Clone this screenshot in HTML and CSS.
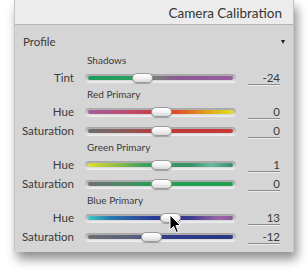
FILE: index.html
```html
<!DOCTYPE html>
<html>
<head>
<meta charset="utf-8">
<link rel="stylesheet" href="styles.css">
</head>
<body>
<div class="panel">
  <div class="header">Camera Calibration</div>
  <div class="profile"><span>Profile</span><span class="tri"></span></div>
  <div class="section">Shadows</div>
  <div class="row">
    <div class="label">Tint</div>
    <div class="track"><div class="bar g-tint"></div><div class="thumb" style="left:38%"></div></div>
    <div class="value">-24</div>
  </div>
  <div class="section">Red Primary</div>
  <div class="row">
    <div class="label">Hue</div>
    <div class="track"><div class="bar g-rhue"></div><div class="thumb" style="left:50%"></div></div>
    <div class="value">0</div>
  </div>
  <div class="row second">
    <div class="label">Saturation</div>
    <div class="track"><div class="bar g-rsat"></div><div class="thumb" style="left:50%"></div></div>
    <div class="value">0</div>
  </div>
  <div class="section">Green Primary</div>
  <div class="row">
    <div class="label">Hue</div>
    <div class="track"><div class="bar g-ghue"></div><div class="thumb" style="left:50.5%"></div></div>
    <div class="value">1</div>
  </div>
  <div class="row second">
    <div class="label">Saturation</div>
    <div class="track"><div class="bar g-gsat"></div><div class="thumb" style="left:50%"></div></div>
    <div class="value">0</div>
  </div>
  <div class="section">Blue Primary</div>
  <div class="row">
    <div class="label">Hue</div>
    <div class="track"><div class="bar g-bhue"></div><div class="thumb" style="left:56.5%"></div>
      <svg class="cursor" width="13" height="20" viewBox="0 0 13 20"><path d="M1 1 L1 16 L4.6 12.4 L7.2 18.5 L9.4 17.5 L6.9 11.6 L11.6 11.6 Z" fill="#000" stroke="#fff" stroke-width="1" stroke-linejoin="round"/></svg>
    </div>
    <div class="value">13</div>
  </div>
  <div class="row second">
    <div class="label">Saturation</div>
    <div class="track"><div class="bar g-bsat"></div><div class="thumb" style="left:44%"></div></div>
    <div class="value">-12</div>
  </div>
</div>
</body>
</html>
```
FILE: styles.css
```css
html, body {
  margin: 0;
  padding: 0;
  background: #ffffff;
}
body {
  width: 308px;
  height: 274px;
  overflow: hidden;
  font-family: "Lato", "Open Sans", sans-serif;
  color: #3a3a3a;
}
.panel {
  margin-left: 14px;
  width: 280px;
  height: 252px;
  background: #d5d5d5;
  box-shadow: 3px 7px 10px rgba(0, 0, 0, 0.45);
  box-sizing: border-box;
  border-left: 1px solid #c4c4c4;
  border-right: 1px solid #c4c4c4;
}
.header {
  height: 25px;
  box-sizing: border-box;
  background: #ececec;
  border-bottom: 1px solid #b4b4b4;
  text-align: right;
  padding-right: 11px;
  font-size: 13.5px;
  line-height: 27px;
  color: #363636;
}
.profile {
  height: 27px;
  box-sizing: border-box;
  padding: 6px 8px 0 8px;
  display: flex;
  align-items: center;
  justify-content: space-between;
  font-size: 11.5px;
}
.tri {
  width: 0;
  height: 0;
  border-left: 2.5px solid transparent;
  border-right: 2.5px solid transparent;
  border-top: 4px solid #222;
}
.section {
  height: 17px;
  line-height: 17px;
  padding-left: 72px;
  font-size: 10px;
  color: #3a3a3a;
}
.row {
  height: 17px;
  display: flex;
  align-items: center;
}
.row.second {
  margin-top: 2px;
}
.label {
  width: 59px;
  text-align: right;
  font-size: 11.5px;
  margin-right: 11px;
}
.track {
  position: relative;
  width: 151px;
  height: 8px;
  border-radius: 4px;
  background: linear-gradient(#a4a4a4, #c6c6c6 60%, #ececec);
  box-shadow: 0 1px 0 #eeeeee;
}
.bar {
  position: absolute;
  left: 3px;
  right: 3px;
  top: 2px;
  height: 4px;
  border-radius: 2px;
}
.g-tint { background: linear-gradient(90deg, #1f9a5a 0%, #28a060 34%, #7a7a7a 48%, #8a5a92 62%, #9a5a9e 100%); }
.g-rhue { background: linear-gradient(90deg, #a0609a 0%, #b8507a 22%, #d03838 50%, #e05028 62%, #e0a020 82%, #e0e020 100%); }
.g-rsat { background: linear-gradient(90deg, #6e6e6e 0%, #8a5a5a 25%, #c03838 50%, #c83838 100%); }
.g-ghue { background: linear-gradient(90deg, #e0e030 0%, #b0c840 12%, #3aa060 40%, #3a9068 70%, #6ab8a0 85%, #3a8a70 100%); }
.g-gsat { background: linear-gradient(90deg, #6e6e6e 0%, #508868 25%, #20a050 50%, #20a050 100%); }
.g-bhue { background: linear-gradient(90deg, #40c8c8 0%, #2a7ab0 15%, #2a3a98 45%, #3a3a90 70%, #9a68a8 90%, #8a5898 100%); }
.g-bsat { background: linear-gradient(90deg, #6e6e6e 0%, #5a6080 30%, #303c88 55%, #2a3880 100%); }
.thumb {
  position: absolute;
  top: -1px;
  width: 21px;
  height: 10px;
  margin-left: -10px;
  box-sizing: border-box;
  border-radius: 5px;
  border: 1px solid #9a9a9a;
  background: linear-gradient(#ffffff, #f2f2f2 50%, #d8d8d8);
  box-shadow: 0 1px 1px rgba(0, 0, 0, 0.25);
}
.cursor {
  position: absolute;
  left: 84px;
  top: 0px;
}
.value {
  width: 32px;
  margin-left: 12px;
  height: 13px;
  text-align: right;
  font-size: 11.5px;
  line-height: 13px;
  border-bottom: 1px solid #8c8c8c;
  box-shadow: 0 1px 0 #ececec;
}
```
